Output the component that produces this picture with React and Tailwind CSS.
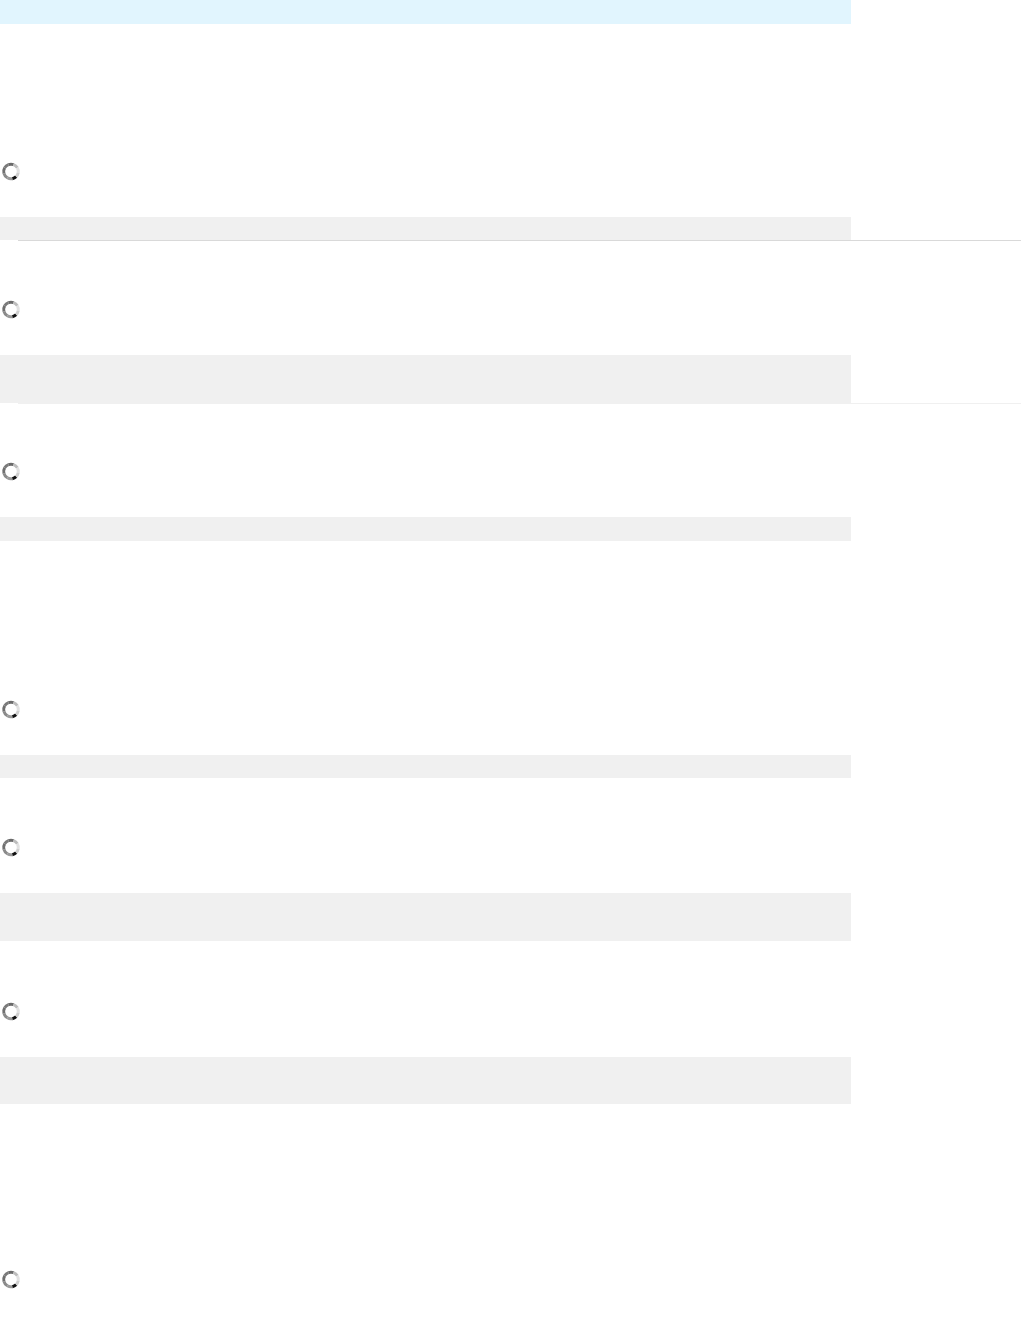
const SEGMENTS = [
  ['#111111', 45, 80],
  ['#9a9a9a', 80, 120],
  ['#8a8a8a', 120, 165],
  ['#6f6f6f', 165, 210],
  ['#7a7a7a', 210, 250],
  ['#6a6a6a', 250, 290],
  ['#bdbdbd', 290, 330],
  ['#e2e2e2', 330, 370],
  ['#cfcfcf', 370, 405],
];

function arc(cx, cy, r, a0, a1) {
  const p = (a) => [cx + r * Math.cos((a * Math.PI) / 180), cy + r * Math.sin((a * Math.PI) / 180)];
  const [x0, y0] = p(a0);
  const [x1, y1] = p(a1);
  return `M${x0.toFixed(2)} ${y0.toFixed(2)} A${r} ${r} 0 0 1 ${x1.toFixed(2)} ${y1.toFixed(2)}`;
}

function Spinner() {
  return (
    <svg width="20" height="20" viewBox="0 0 20 20" className="block ml-[1px]">
      {SEGMENTS.map(([c, a0, a1], i) => (
        <path key={i} d={arc(10, 9.5, 7.3, a0, a1)} stroke={c} strokeWidth="3" fill="none" />
      ))}
    </svg>
  );
}

function Block({ top, barH, line }) {
  return (
    <>
      <div className={top}>
        <Spinner />
      </div>
      <div className={`w-[851px] bg-[#f0f0f0] mt-[35px] ${barH}`} />
      {line === 'dark' && <div className="ml-[18px] border-t border-[#d9d9d9]" />}
      {line === 'light' && <div className="ml-[18px] border-t border-[#f0f0f0]" />}
    </>
  );
}

export default function App() {
  return (
    <div className="min-h-screen bg-white w-[1021px]">
      <div className="w-[851px] h-[24px] bg-[#e1f5fe]" />
      <Block top="mt-[138px]" barH="h-[23px]" line="dark" />
      <Block top="mt-[59px]" barH="h-[48px]" line="light" />
      <Block top="mt-[58px]" barH="h-[24px]" />
      <Block top="mt-[159px]" barH="h-[23px]" />
      <Block top="mt-[60px]" barH="h-[48px]" />
      <Block top="mt-[61px]" barH="h-[47px]" />
      <div className="mt-[166px]">
        <Spinner />
      </div>
    </div>
  );
}
